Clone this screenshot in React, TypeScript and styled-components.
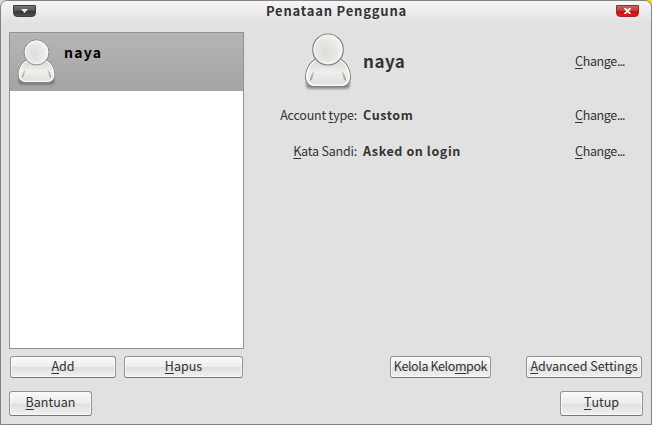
import React from "react";
import styled, { createGlobalStyle } from "styled-components";

const GlobalStyle = createGlobalStyle`
  *, *::before, *::after { box-sizing: border-box; }
  body { margin: 0; background: #e2e2e2; overflow: hidden; }
`;

const Corner = styled.div`
  width: 652px;
  height: 425px;
  background: linear-gradient(90deg, #d9d9d9 50%, #ffd800 50%);
`;

const Window = styled.div`
  display: flex;
  flex-direction: column;
  width: 652px;
  height: 425px;
  border: 1px solid #838383;
  border-radius: 7px 7px 0 0;
  background: linear-gradient(#f6f6f6, #e1e1e1 23px, #e1e1e1);
  font-family: "Noto Sans CJK SC", "Noto Sans", sans-serif;
  font-size: 12.5px;
  color: #333;
  white-space: pre;
  cursor: default;
`;

const TitleBar = styled.header`
  display: flex;
  justify-content: space-between;
  height: 31px;
  padding: 4px 12px 0;
`;

const Title = styled.h1`
  margin: -4px 0 0 21px;
  font-size: 13px;
  line-height: 19px;
  font-weight: 700;
  letter-spacing: 0.8px;
`;

const WindowButton = styled.button<{ $close?: boolean }>`
  display: flex;
  align-items: center;
  justify-content: center;
  width: 23px;
  height: 12px;
  padding: 0;
  border: 1px solid ${(p) => (p.$close ? "#a62525" : "#3d3d3d")};
  border-radius: 0 0 4px 4px;
  background: ${(p) =>
    p.$close
      ? "linear-gradient(#c86464, #bd3c3c 49%, #c91010 50%, #e01b16)"
      : "linear-gradient(#777, #555 49%, #343434 50%, #505050)"};
`;

const Content = styled.main`
  display: flex;
  height: 317px;
  padding: 0 8px;
`;

const UserList = styled.section`
  width: 235px;
  height: 317px;
  border: 1px solid #929292;
  background: #fff;
`;

const UserRow = styled.div`
  display: flex;
  height: 58px;
  padding: 6px 7px 4px;
  background: linear-gradient(#b5b5b5, #a4a4a4);
`;

const UserName = styled.div`
  margin: 2px 0 0 8px;
  color: #000;
  font-size: 14px;
  line-height: 22px;
  font-weight: 700;
  letter-spacing: 1.3px;
`;

const Details = styled.section`
  flex: 1;
  padding-left: 26px;
`;

const Row = styled.div<{ $h: number }>`
  display: grid;
  grid-template-columns: 87px 1fr 68px;
  grid-template-rows: 100%;
  align-items: center;
  column-gap: 6px;
  height: ${(p) => p.$h}px;
`;

const Label = styled.div`
  text-align: right;
  letter-spacing: -0.2px;
`;

const AvatarCell = styled.div`
  display: flex;
  justify-content: flex-end;
  padding: 3px 5px 0 0;
`;

const Value = styled.div<{ $large?: boolean }>`
  font-size: ${(p) => (p.$large ? 17 : 12.5)}px;
  font-weight: 700;
  letter-spacing: ${(p) => (p.$large ? 0.5 : 0.6)}px;
  padding-bottom: ${(p) => (p.$large ? 1 : 0)}px;
`;

const ChangeLink = styled.a`
  color: #333;
  letter-spacing: -0.35px;
`;

const Dots = styled.span`
  letter-spacing: -1px;
`;

const Key = styled.span`
  text-decoration: underline;
  text-decoration-thickness: 1px;
  text-underline-offset: 2px;
`;

const Actions = styled.div`
  display: flex;
  height: 22px;
  margin: 7px 9px 0;
`;

const Footer = styled.footer`
  display: flex;
  justify-content: space-between;
  height: 25px;
  margin: 13px 8px 0;
`;

const Button = styled.button<{ $w: number; $ml?: number; $ls?: number }>`
  display: flex;
  align-items: center;
  justify-content: center;
  width: ${(p) => p.$w}px;
  height: 100%;
  margin-left: ${(p) => p.$ml ?? 0}px;
  padding: 0 0 3px;
  border: 1px solid #939393;
  border-bottom-color: #777;
  border-radius: 3px;
  background: linear-gradient(#fafafa, #ededed 49%, #dfdfdf 52%, #f1f1f1);
  box-shadow: inset 0 0 0 1px #ffffff99;
  color: #333;
  font: inherit;
  letter-spacing: ${(p) => p.$ls ?? 0}px;
  white-space: pre;

  ${Footer} & {
    padding-bottom: 4px;
  }
`;

function Avatar({ width, height, id }: { width: number; height: number; id: string }) {
  return (
    <svg width={width} height={height} viewBox="0 0 48 58" preserveAspectRatio="none">
      <defs>
        <radialGradient id={`${id}-head`} cx=".42" cy=".55" r=".65">
          <stop offset="0" stopColor="#ddddda" />
          <stop offset=".55" stopColor="#e8e8e5" />
          <stop offset="1" stopColor="#fafaf9" />
        </radialGradient>
        <linearGradient id={`${id}-body`} x2="0" y2="1">
          <stop offset="0" stopColor="#d3d3cf" />
          <stop offset=".5" stopColor="#efefed" />
          <stop offset="1" stopColor="#dededb" />
        </linearGradient>
        <filter id={`${id}-blur`} x="-20%" y="-50%" width="140%" height="200%">
          <feGaussianBlur stdDeviation="1.2" />
        </filter>
      </defs>
      <rect x="2" y="47" width="44" height="9" rx="4" fill="#555" opacity=".6" filter={`url(#${id}-blur)`} />
      <path
        d="M14 25C6 28 2 36 1.5 43C1 49 5 53.5 10 53.5H38C43 53.5 47 49 46.5 43C46 36 42 28 34 25Z"
        fill={`url(#${id}-body)`}
        stroke="#858582"
        strokeWidth="1.1"
      />
      <path
        d="M14 26.5C7 29 3.4 36 2.9 43C2.5 48 6 52.2 10 52.2H38C42 52.2 45.5 48 45.1 43C44.6 36 41 29 34 26.5"
        fill="none"
        stroke="#fff"
        strokeWidth="1.3"
      />
      <path d="M10 38Q6.5 42 5.7 48L8 47ZM38 38Q41.5 42 42.3 48L40 47Z" fill="#aaaaa6" />
      <ellipse cx="24" cy="16.5" rx="15.3" ry="15.5" fill={`url(#${id}-head)`} stroke="#858582" strokeWidth="1.2" />
      <ellipse cx="24" cy="16.4" rx="14" ry="14.2" fill="none" stroke="#fff" strokeWidth="1" opacity=".7" />
    </svg>
  );
}

function Change() {
  return (
    <ChangeLink>
      <Key>C</Key>hange<Dots>...</Dots>
    </ChangeLink>
  );
}

export default function App() {
  return (
    <Corner>
      <GlobalStyle />
      <Window>
        <TitleBar>
          <WindowButton aria-label="Menu">
            <svg width="7" height="4" viewBox="0 0 7 4"><path d="M0 0H7L3.5 4Z" fill="#eee" /></svg>
          </WindowButton>
          <Title>Penataan Pengguna</Title>
          <WindowButton $close aria-label="Tutup">
            <svg width="7" height="6" viewBox="0 0 7 6"><path d="M.5 0L6.5 6M6.5 0L.5 6" stroke="#fff" strokeWidth="1.8" /></svg>
          </WindowButton>
        </TitleBar>
        <Content>
          <UserList>
            <UserRow>
              <Avatar id="small" width={39} height={47} />
              <UserName>naya</UserName>
            </UserRow>
          </UserList>
          <Details>
            <Row $h={57}>
              <AvatarCell><Avatar id="large" width={48} height={58} /></AvatarCell>
              <Value $large>naya</Value>
              <Change />
            </Row>
            <Row $h={50}>
              <Label>Account <Key>t</Key>ype:</Label>
              <Value>Custom</Value>
              <Change />
            </Row>
            <Row $h={22}>
              <Label><Key>K</Key>ata Sandi:</Label>
              <Value>Asked on login</Value>
              <Change />
            </Row>
          </Details>
        </Content>
        <Actions>
          <Button $w={106}><Key>A</Key>dd</Button>
          <Button $w={119} $ml={8}><Key>H</Key>apus</Button>
          <Button $w={101} $ml={147} $ls={-0.4}>Kelola Kelo<Key>m</Key>pok</Button>
          <Button $w={116} $ml={35}><Key>A</Key>dvanced Settings</Button>
        </Actions>
        <Footer>
          <Button $w={83}><Key>B</Key>antuan</Button>
          <Button $w={83}><Key>T</Key>utup</Button>
        </Footer>
      </Window>
    </Corner>
  );
}
